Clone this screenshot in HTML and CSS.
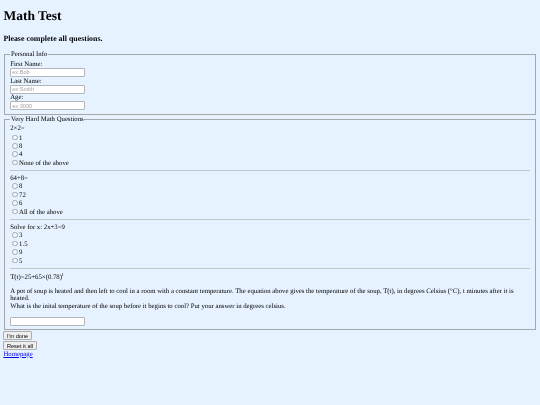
FILE: index.html
```html
<!DOCTYPE html>
<html lang="en">
<head>
<meta charset="utf-8">
<title>Math Test</title>
<link rel="stylesheet" href="styles.css">
</head>
<body>
<h1>Math Test</h1>
<h3>Please complete all questions.</h3>
<form>
<fieldset class="personal">
<legend>Personal Info</legend>
<label class="field" for="fn">First Name:</label>
<input class="text" id="fn" type="text" placeholder="ex:Bob">
<label class="field" for="ln">Last Name:</label>
<input class="text" id="ln" type="text" placeholder="ex:Smith">
<label class="field" for="age">Age:</label>
<input class="text" id="age" type="text" placeholder="ex:3000">
</fieldset>
<fieldset class="quiz">
<legend>Very Hard Math Questions</legend>
<div class="question">2×2=</div>
<label class="opt"><input type="radio" name="q1">1</label>
<label class="opt"><input type="radio" name="q1">8</label>
<label class="opt"><input type="radio" name="q1">4</label>
<label class="opt"><input type="radio" name="q1">None of the above</label>
<hr>
<div class="question">64÷8=</div>
<label class="opt"><input type="radio" name="q2">8</label>
<label class="opt"><input type="radio" name="q2">72</label>
<label class="opt"><input type="radio" name="q2">6</label>
<label class="opt"><input type="radio" name="q2">All of the above</label>
<hr>
<div class="question">Solve for x: 2x+3=9</div>
<label class="opt"><input type="radio" name="q3">3</label>
<label class="opt"><input type="radio" name="q3">1.5</label>
<label class="opt"><input type="radio" name="q3">9</label>
<label class="opt"><input type="radio" name="q3">5</label>
<hr>
<div class="question formula">T(t)=25+65×(0.78)<sup>t</sup></div>
<p class="problem">A pot of soup is heated and then left to cool in a room with a constant temperature. The equation above gives the temperature of the soup, T(t), in degrees Celsius (°C), t minutes after it is heated.<br>What is the inital temperature of the soup before it begins to cool? Put your answer in degrees celsius.</p>
<input class="text" type="text">
</fieldset>
<button type="button">I'm done</button>
<button type="reset">Reset it all</button>
</form>
<a href="#">Homepage</a>
</body>
</html>
```
FILE: styles.css
```css
html {
  background: #e6f2ff;
}
body {
  margin: 3.4px;
  font: 6.75px/7.7px "Liberation Serif", serif;
  color: #000;
  text-rendering: geometricPrecision;
  filter: blur(0.2px);
}
h1 {
  margin: 5px 0 9.7px;
  font-size: 13.5px;
  line-height: 15.5px;
}
h3 {
  margin: 0 0 7.5px;
  font-size: 7.9px;
  line-height: 9px;
}
fieldset {
  margin: 0 0.85px;
  padding: 0 5px 3.4px;
  border: 1px solid #a4a8ad;
  min-width: 0;
}
.personal {
  margin-bottom: 0.3px;
  padding-top: 1.4px;
}
.quiz {
  margin-bottom: 1px;
  padding-bottom: 3.6px;
}
.quiz legend + .question {
  padding: 1.8px 0 0.2px;
  margin-bottom: -0.5px;
}
legend {
  padding: 1px 0.85px 0;
}
.field {
  display: block;
  padding-top: 0.8px;
  margin-bottom: -0.8px;
}
.text {
  display: block;
  box-sizing: border-box;
  width: 74.4px;
  height: 9px;
  margin: 0;
  padding: 0 1px;
  border: 1px solid #b3b6ba;
  border-radius: 1px;
  background: #fff;
  font: 5.6px "Liberation Sans", sans-serif;
}
.text::placeholder {
  color: #a3a3a3;
}
.question {
  padding-top: 0.8px;
  margin-bottom: -0.8px;
  line-height: 8px;
}
.question.formula {
  padding-top: 2px;
  margin-bottom: -2px;
}
.opt {
  display: flex;
  align-items: center;
  box-sizing: border-box;
  height: 8.4px;
  padding-top: 2px;
}
.opt input {
  appearance: none;
  box-sizing: border-box;
  width: 5.6px;
  height: 5.6px;
  margin: -2px 1.2px 0 2.1px;
  border: 0.6px solid #a3a6aa;
  border-radius: 50%;
  background: #f4f8fc;
}
hr {
  height: 1px;
  margin: 3.2px 0;
  border: 0;
  background: #c3c7cc;
}
sup {
  font-size: 5px;
  line-height: 0;
}
.problem {
  margin: 7.8px 0 5.8px;
}
button {
  display: block;
  box-sizing: border-box;
  height: 9px;
  margin: 0 0 0.8px;
  padding: 0 2.5px;
  border: 1px solid #adadad;
  border-radius: 1px;
  background: #efefef;
  color: #000;
  font: 5.6px "Liberation Sans", sans-serif;
}
a {
  color: #00e;
}
```
